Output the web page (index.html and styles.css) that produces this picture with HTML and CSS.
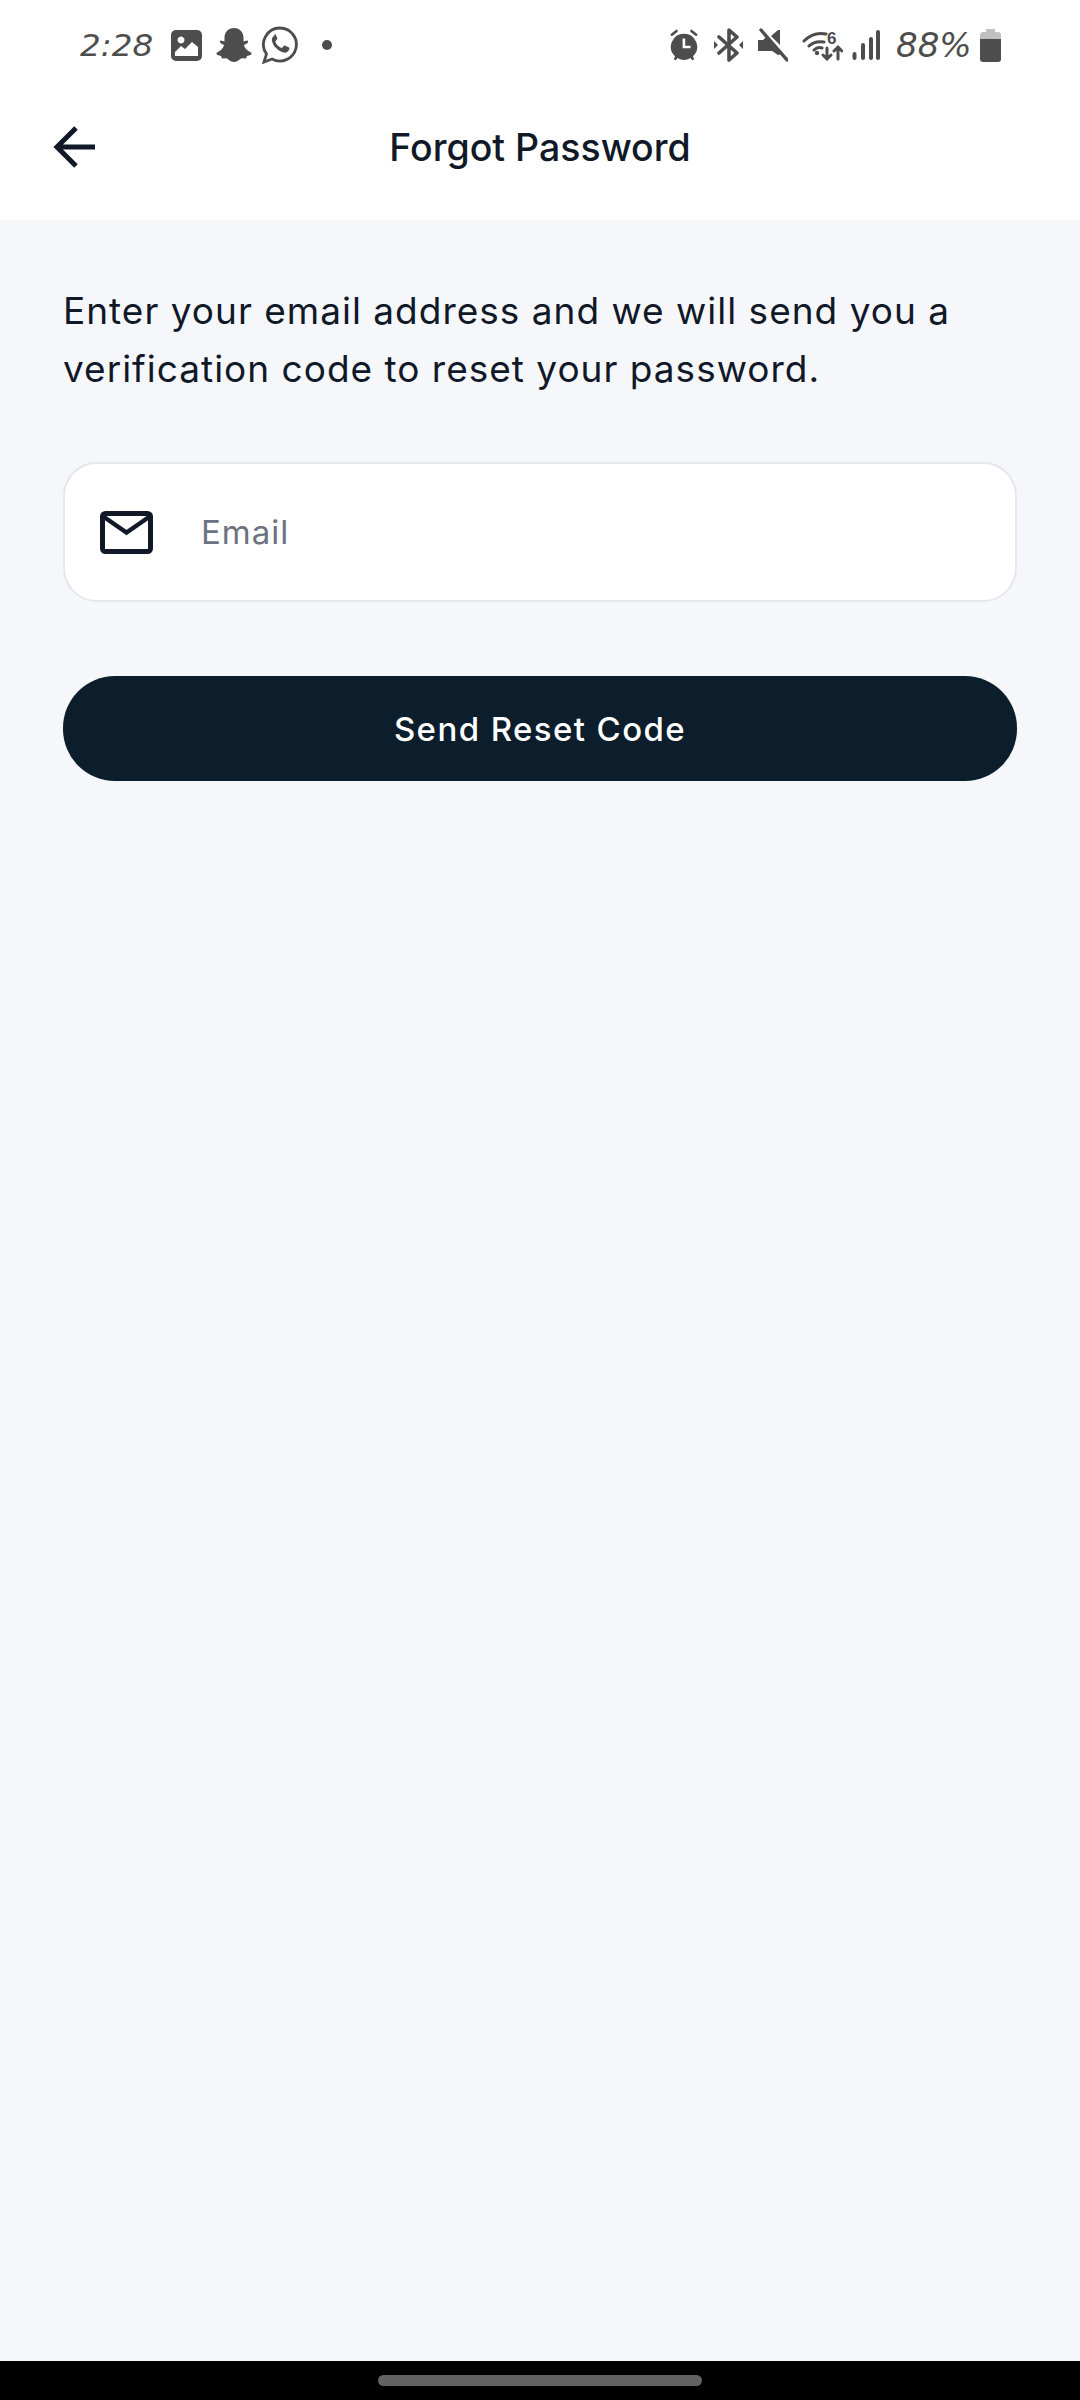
FILE: index.html
```html
<!DOCTYPE html>
<html lang="en">
<head>
    <meta charset="UTF-8">
    <title>Forgot Password</title>
    <link rel="stylesheet" href="styles.css">
</head>
<body>
    <div class="app">
        <header class="top">
            <div class="status-bar">
                <div class="status-left">
                    <span class="status-text time">2:28</span>
                    <svg class="ic-image" viewBox="0 0 31 31"><path fill-rule="evenodd" d="M5 0h21a5 5 0 0 1 5 5v21a5 5 0 0 1-5 5H5a5 5 0 0 1-5-5V5a5 5 0 0 1 5-5zM10 6.500a3.500 3.500 0 1 0 .01 0zM4 22v4h23v-9l-6-5-7 7-4-3z"/></svg>
                    <svg class="ic-snap" viewBox="0 0 36 36"><path d="M18 1c6 0 9.500 4.500 9.500 9.500v4l3.500-1c1.500 0 1.500 2 0 3l-3 1.500c.5 3 3.500 6 7 7.500 1 .5.500 2-.5 2.500l-3.500 1-1 2.500-4-.2c-2.500.5-4 3.700-8 3.700s-5.500-3.200-8-3.700l-4 .2-1-2.500-3.500-1c-1-.5-1.500-2-.5-2.500 3.500-1.500 6.500-4.500 7-7.500l-3-1.500c-1.500-1-1.500-3 0-3l3.500 1v-4C8.500 5.500 12 1 18 1z"/></svg>
                    <svg class="ic-whatsapp" viewBox="0 0 36 38"><path fill="none" stroke="#4d4d4d" stroke-width="2.800" d="M18 2a16.500 16.500 0 1 1-8 31l-8 3 2.500-8A16.500 16.500 0 0 1 18 2z"/><path d="M12.500 9.500c-2 1-3 3-2.500 5.500 1 5 6 10 11.500 11.500 2.500.5 4.500-.5 5.500-2.500.5-1 .5-2 0-2.500l-4-2c-.5-.2-1-.1-1.500.5l-1 1.500c-.5.5-1 .5-1.500.3-2.500-1-4.500-3-5.500-5.500-.2-.5-.1-1 .3-1.500l1.200-1.300c.4-.4.4-.9.2-1.400l-1.500-3.500c-.3-.6-.7-.6-1.200-.6z"/></svg>
                    <span class="dot"></span>
                </div>
                <div class="status-right">
                    <svg class="ic-alarm" viewBox="0 0 30 34"><path fill-rule="evenodd" d="M15 5a14 14 0 0 1 9.500 24.300l1.500 2.700-2 1.500-2-2.500a14 14 0 0 1-14 0l-2 2.500-2-1.500 1.500-2.700A14 14 0 0 1 15 5zM13.500 10v10.500H22v-2.800h-5.700V10z"/><path fill="none" stroke="#4d4d4d" stroke-width="2.800" stroke-linecap="round" d="M2 6l5-4M28 6l-5-4"/></svg>
                    <svg class="ic-bt" viewBox="0 0 29 34"><path fill="none" stroke="#4d4d4d" stroke-width="3.600" stroke-linejoin="round" stroke-linecap="round" d="M5 9l18 16-8 7V2l8 7L5 25"/><path d="M0 13l4 4-4 4zM29 13l-4 4 4 4z"/></svg>
                    <svg class="ic-mute" viewBox="0 0 30 34"><path d="M0 12h5l3-3 14 15v2l-1 1-1 0-6-4H0zM20 2h2v15L13 8z"/><path stroke="#4d4d4d" stroke-width="3.400" stroke-linecap="round" d="M3 2l26 30"/></svg>
                    <svg class="ic-wifi" viewBox="0 0 41 31"><g fill="none" stroke="#4d4d4d" stroke-width="3" stroke-linecap="round"><path d="M2 11c6-6 13-9 22-7M7 16c4-4 9-5 15-4M12 20c2-2 5-3 8-2"/><path d="M25 18v11M21 25l4 4 4-4M36 29V18M32 21l4-4 4 4"/></g><circle cx="15" cy="23" r="2.200"/><text class="wifi-six" x="25" y="14">6</text></svg>
                    <svg class="ic-signal" viewBox="0 0 28 30"><path stroke="#4d4d4d" stroke-width="4" stroke-linecap="round" d="M2.500 28v-4M11 28V15M19 28V9M26 28V2"/></svg>
                    <span class="status-text pct">88%</span>
                    <svg class="ic-battery" viewBox="0 0 21 33"><path fill="#c0c0c0" d="M6 0h9v3h3a3 3 0 0 1 3 3v4H0V6a3 3 0 0 1 3-3h3z"/><path d="M0 10h21v20a3 3 0 0 1-3 3H3a3 3 0 0 1-3-3z"/></svg>
                </div>
            </div>
            <div class="title-bar">
                <svg class="back" viewBox="0 0 42 42"><path fill="none" stroke="#111827" stroke-width="5" d="M23 2L4 21l19 19M4 21h38"/></svg>
                <h1>Forgot Password</h1>
            </div>
        </header>

        <main class="content">
            <p class="intro">Enter your email address and we will send you a verification code to reset your password.</p>

            <form class="reset-form">
                <label class="field">
                    <svg class="mail" viewBox="0 0 53 43"><rect x="2.500" y="2.500" width="48" height="38" rx="3" fill="none" stroke="#111827" stroke-width="5"/><path fill="none" stroke="#111827" stroke-width="4.400" d="M4 6l22.500 15.500L49 6"/></svg>
                    <input type="email" placeholder="Email">
                </label>
                <button type="button">Send Reset Code</button>
            </form>
        </main>

        <div class="nav-bar"><span class="pill"></span></div>
    </div>
</body>
</html>
```

FILE: styles.css
```css
* {
    box-sizing: border-box;
}
body {
    margin: 0;
    font-family: Inter, "Noto Sans", sans-serif;
    background-color: #f5f7fb;
}
.app {
    height: 2400px;
    display: flex;
    flex-direction: column;
}

/* status bar */
.top {
    height: 220px;
    background-color: #ffffff;
}
.status-bar {
    height: 90px;
    display: flex;
    justify-content: space-between;
    align-items: center;
    padding: 0 79px 0 80px;
}
.status-left,
.status-right {
    display: flex;
    align-items: center;
}
.status-bar svg {
    display: block;
    fill: #4d4d4d;
}
.status-text {
    font-family: "DejaVu Sans", sans-serif;
    color: #4d4d4d;
    font-style: italic;
}
.time {
    font-size: 31px;
    width: 75px;
    margin-right: 16px;
    white-space: nowrap;
    transform: scaleX(1.05);
    transform-origin: left;
}
.ic-image {
    width: 31px;
    height: 31px;
    margin-right: 14px;
}
.ic-snap {
    width: 36px;
    height: 36px;
    margin-right: 10px;
}
.ic-whatsapp {
    width: 36px;
    height: 38px;
    margin-right: 24px;
}
.dot {
    width: 10px;
    height: 10px;
    border-radius: 50%;
    background-color: #4d4d4d;
}
.ic-alarm {
    width: 28px;
    height: 32px;
    margin-right: 16px;
}
.ic-bt {
    width: 29px;
    height: 34px;
    margin-right: 15px;
}
.ic-mute {
    width: 30px;
    height: 34px;
    margin-right: 14px;
}
.ic-wifi {
    width: 41px;
    height: 31px;
    margin-right: 9px;
}
.wifi-six {
    font-family: "Liberation Sans", sans-serif;
    font-size: 17px;
    font-weight: 700;
    fill: #4d4d4d;
}
.ic-signal {
    width: 28px;
    height: 30px;
    margin-right: 16px;
}
.pct {
    font-size: 34px;
    width: 77px;
    margin-right: 7px;
    white-space: nowrap;
    letter-spacing: 0;
}
.ic-battery {
    width: 21px;
    height: 33px;
}

/* title */
.title-bar {
    position: relative;
    height: 116px;
    padding-bottom: 2px;
    display: flex;
    align-items: center;
    justify-content: center;
}
.back {
    position: absolute;
    left: 53px;
    top: 36px;
    width: 42px;
    height: 42px;
}
h1 {
    margin: 0;
    font-size: 37.500px;
    font-weight: 500;
    color: #111827;
}

.content {
    flex: 1;
    padding: 0 63px;
}
.intro {
    margin: 62px 0 0;
    font-size: 37px;
    line-height: 58px;
    letter-spacing: 1px;
    color: #111827;
}
.reset-form {
    margin-top: 64px;
}
.field {
    height: 140px;
    display: flex;
    align-items: center;
    padding: 0 35px;
    background-color: #ffffff;
    border: 2px solid #e5e7eb;
    border-radius: 34px;
}
.mail {
    width: 53px;
    height: 43px;
    flex: none;
    margin-right: 48px;
}
.field input {
    flex: 1;
    border: none;
    outline: none;
    padding: 0;
    font-family: inherit;
    font-size: 33px;
    letter-spacing: 1px;
    color: #111827;
    background: transparent;
}
.field input::placeholder {
    color: #6b7280;
    opacity: 1;
}
button {
    display: block;
    width: 100%;
    height: 105px;
    margin-top: 74px;
    border: none;
    border-radius: 52px;
    background-color: #0c1d2c;
    color: #ffffff;
    font-family: inherit;
    font-size: 33px;
    font-weight: 500;
    letter-spacing: 1.400px;
}

.nav-bar {
    height: 39px;
    background-color: #000000;
    display: flex;
    justify-content: center;
    padding-top: 14px;
}
.pill {
    width: 324px;
    height: 11px;
    border-radius: 6px;
    background-color: #636363;
}
```
